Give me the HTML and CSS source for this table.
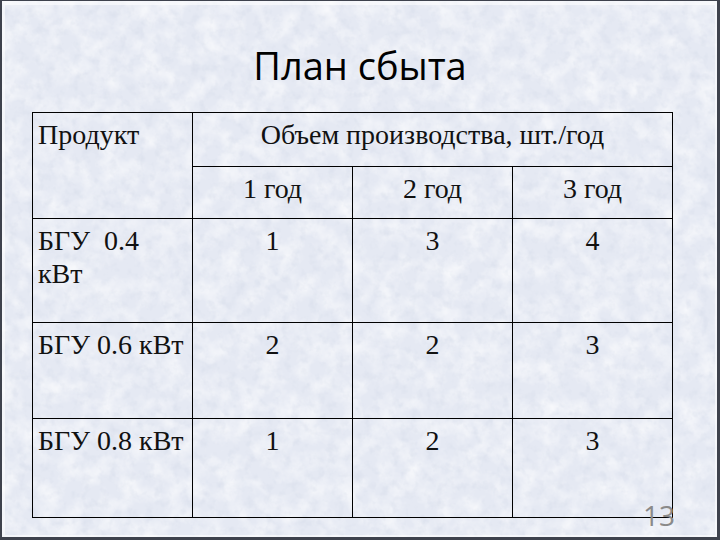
FILE: index.html
```html
<!DOCTYPE html>
<html lang="ru">
<head>
<meta charset="utf-8">
<title>План сбыта</title>
<link rel="stylesheet" href="styles.css">
</head>
<body>
<div class="slide">
  <svg class="texture" width="720" height="540" aria-hidden="true">
    <filter id="paper" x="0" y="0" width="100%" height="100%">
      <feTurbulence type="fractalNoise" baseFrequency="0.05" numOctaves="4" seed="7" result="n"/>
      <feColorMatrix in="n" type="matrix" values="0 0 0 0 1  0 0 0 0 1  0 0 0 0 1  1.3 0 0 0 -0.5"/>
    </filter>
    <filter id="paper2" x="0" y="0" width="100%" height="100%">
      <feTurbulence type="fractalNoise" baseFrequency="0.11" numOctaves="3" seed="3" result="m"/>
      <feColorMatrix in="m" type="matrix" values="0 0 0 0 0.62  0 0 0 0 0.67  0 0 0 0 0.78  0.9 0 0 0 -0.45"/>
    </filter>
    <rect width="720" height="540" filter="url(#paper)"/>
    <rect width="720" height="540" filter="url(#paper2)"/>
  </svg>

  <h1 class="title">План сбыта</h1>

  <div class="grid">
    <div class="cell product">Продукт</div>
    <div class="cell volume">Объем производства, шт./год</div>
    <div class="cell center">1 год</div>
    <div class="cell center">2 год</div>
    <div class="cell center last">3 год</div>

    <div class="cell">БГУ&nbsp; 0.4<br>кВт</div>
    <div class="cell center">1</div>
    <div class="cell center">3</div>
    <div class="cell center last">4</div>

    <div class="cell">БГУ 0.6 кВт</div>
    <div class="cell center">2</div>
    <div class="cell center">2</div>
    <div class="cell center last">3</div>

    <div class="cell">БГУ 0.8 кВт</div>
    <div class="cell center">1</div>
    <div class="cell center">2</div>
    <div class="cell center last">3</div>
  </div>

  <div class="page-num">13</div>
  <div class="frame"></div>
</div>
</body>
</html>
```

FILE: styles.css
```css
html, body {
  margin: 0;
  padding: 0;
}

body {
  width: 720px;
  height: 540px;
  overflow: hidden;
  background: #e8ecf5;
}

.slide {
  position: relative;
  width: 720px;
  height: 540px;
  box-sizing: border-box;
  padding-top: 39px;
  background: #e5e9f3;
  overflow: hidden;
}

.texture {
  position: absolute;
  left: 0;
  top: 0;
  z-index: 0;
}

.title {
  position: relative;
  z-index: 1;
  margin: 0;
  height: 52px;
  line-height: 52px;
  font-family: "Open Sans", "Noto Sans", sans-serif;
  font-weight: 400;
  font-size: 38px;
  color: #000;
  text-align: center;
}

.grid {
  position: relative;
  z-index: 1;
  margin: 21px 0 0 32px;
  width: 641px;
  box-sizing: border-box;
  border-top: 1px solid #000;
  border-left: 1px solid #000;
  display: grid;
  grid-template-columns: repeat(4, 160px);
  grid-template-rows: 54px 52px 104px 96px 99px;
  font-family: "Liberation Serif", "Times New Roman", serif;
  font-size: 28px;
  line-height: 33px;
  color: #111;
}

.cell {
  box-sizing: border-box;
  border-right: 1px solid #000;
  border-bottom: 1px solid #000;
  padding: 5px 4px 0 5px;
  white-space: nowrap;
}

.product {
  grid-row: span 2;
}

.volume {
  grid-column: span 3;
  text-align: center;
  padding-left: 0;
  padding-right: 0;
}

.center {
  text-align: center;
  padding-left: 0;
  padding-right: 0;
}

.page-num {
  position: absolute;
  z-index: 2;
  left: 643px;
  top: 501px;
  font-family: "Open Sans", "Noto Sans", sans-serif;
  font-size: 28px;
  line-height: 28px;
  color: #8a8a8a;
}

.frame {
  position: absolute;
  z-index: 3;
  inset: 0;
  pointer-events: none;
  box-shadow:
    inset 2px 0 0 #3e424d,
    inset 0 1px 0 #3e424d,
    inset -3px 0 0 #3e424d,
    inset 0 -3px 0 #3e424d,
    inset 0 0 0 5px rgba(255, 255, 255, 0.55);
}
```
